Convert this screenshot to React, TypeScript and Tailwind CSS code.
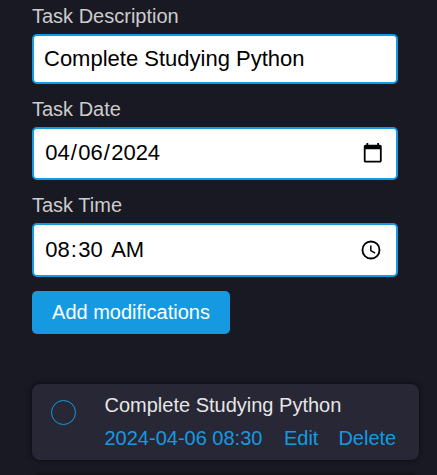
import type { ReactNode } from 'react';

function Label({ children, className }: { children: ReactNode; className: string }) {
  return (
    <div className={`text-[20px] leading-[24px] text-[#cccccc] ${className}`}>{children}</div>
  );
}

function Field({ children, className }: { children: ReactNode; className: string }) {
  return (
    <div
      className={`flex w-[366px] items-center rounded-[5px] border-2 border-[#159ae2] bg-white text-[22px] leading-[26px] text-black ${className}`}
    >
      {children}
    </div>
  );
}

function Segments({ parts }: { parts: string[] }) {
  return (
    <div className="flex whitespace-pre">
      {parts.map((p, i) => (
        <span key={i} className={i % 2 === 0 ? 'px-[1.2px]' : ''}>
          {p}
        </span>
      ))}
    </div>
  );
}

function CalendarIcon() {
  return (
    <svg width="21.5" height="21.5" viewBox="0 0 24 24" fill="black">
      <path d="M20 3h-1V1h-2v2H7V1H5v2H4c-1.1 0-2 .9-2 2v16c0 1.100.9 2 2 2h16c1.100 0 2-.9 2-2V5c0-1.100-.9-2-2-2zm0 18H4V8h16v13z" />
    </svg>
  );
}

function ClockIcon() {
  return (
    <svg width="22" height="22" viewBox="0 0 24 24" fill="none" stroke="black">
      <circle cx="12" cy="12" r="9.3" strokeWidth="2" />
      <path d="M11.800 7v5.600l4.700 2.800" strokeWidth="1.600" />
    </svg>
  );
}

export default function App() {
  return (
    <div className="h-[475px] w-[437px] overflow-hidden bg-[#191924] pl-8 font-['Liberation_Sans',Arial,sans-serif]">
      <Label className="pt-1">Task Description</Label>
      <Field className="mt-1.5 h-[50px] px-[10px]">Complete Studying Python</Field>

      <Label className="mt-[13px]">Task Date</Label>
      <Field className="mt-1.5 h-[53px] justify-between pr-[12.500px] pb-[2px] pl-[10px]">
        <Segments parts={['04', '/', '06', '/', '2024']} />
        <CalendarIcon />
      </Field>

      <Label className="mt-[13px]">Task Time</Label>
      <Field className="mt-1.5 h-[54px] justify-between pr-[14.500px] pb-px pl-[10px]">
        <Segments parts={['08', ':', '30', ' ', 'AM']} />
        <ClockIcon />
      </Field>

      <button className="mt-[14px] flex h-[43px] w-[198px] items-center justify-center rounded-[5px] bg-[#159ae2] pb-[2px] text-[20px] leading-[24px] text-white">
        Add modifications
      </button>

      <div className="mt-[50px] flex h-[76px] w-[387px] rounded-[8px] bg-[#272735] shadow-[0_0_5px_rgba(0,0,0,0.7)]">
        <div className="mt-4 ml-[19px] size-[25px] rounded-full border border-[#159ae2]" />
        <div className="ml-[28.500px] pt-[9px] text-[20px] leading-[24px] whitespace-nowrap">
          <div className="text-[#e6e6e6]">Complete Studying Python</div>
          <div className="mt-[9px] flex text-[#159ae2]">
            <span>2024-04-06 08:30</span>
            <span className="ml-[21.500px]">Edit</span>
            <span className="ml-5">Delete</span>
          </div>
        </div>
      </div>
      <div className="mt-[15px] h-[76px] w-[387px] rounded-[8px] bg-[#272735] shadow-[0_0_5px_rgba(0,0,0,0.7)]" />
    </div>
  );
}
